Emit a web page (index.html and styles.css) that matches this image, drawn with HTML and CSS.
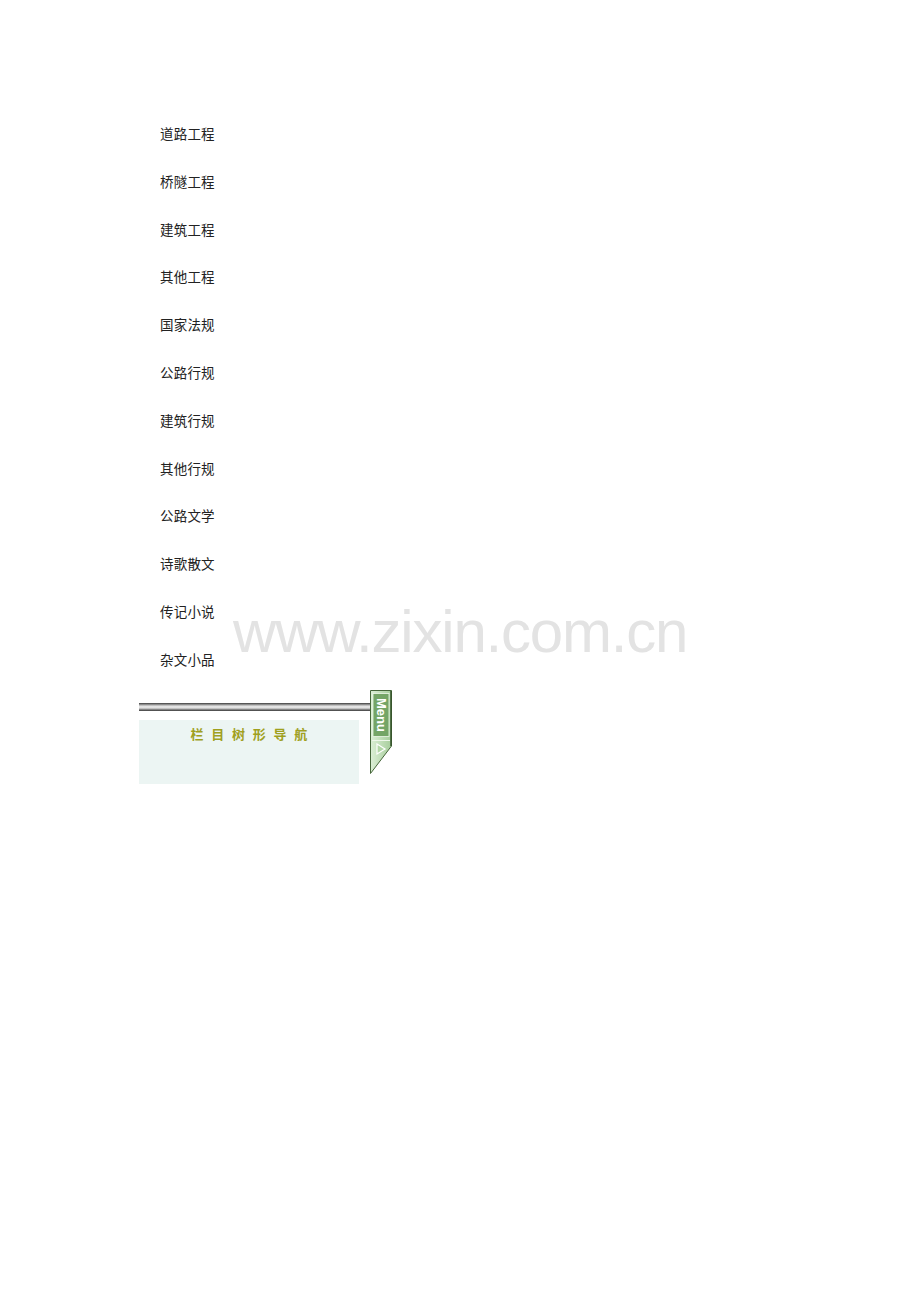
FILE: index.html
```html
<!DOCTYPE html>
<html lang="zh">
<head>
<meta charset="utf-8">
<title>栏目树形导航</title>
<link rel="stylesheet" href="styles.css">
</head>
<body>
<div class="page">
  <ul class="nav-list">
    <li>道路工程</li>
    <li>桥隧工程</li>
    <li>建筑工程</li>
    <li>其他工程</li>
    <li>国家法规</li>
    <li>公路行规</li>
    <li>建筑行规</li>
    <li>其他行规</li>
    <li>公路文学</li>
    <li>诗歌散文</li>
    <li>传记小说</li>
    <li>杂文小品</li>
  </ul>
  <div class="menu-area">
    <div class="menu-left">
      <div class="bar"></div>
      <div class="panel">
        <div class="panel-title">栏 目 树 形 导 航</div>
      </div>
    </div>
    <svg class="menu-tab" width="22" height="84" viewBox="0 0 22 84">
      <defs>
        <linearGradient id="tabg" x1="0" y1="0" x2="1" y2="0">
          <stop offset="0" stop-color="#dcefd6"/>
          <stop offset="1" stop-color="#a6cd9b"/>
        </linearGradient>
      </defs>
      <polygon points="0.5,0.5 21.5,0.5 21.5,56 0.5,83.5" fill="url(#tabg)" stroke="#46663a" stroke-width="1"/>
      <line x1="21" y1="1" x2="21" y2="56" stroke="#34522a" stroke-width="1.5"/>
      <rect x="3" y="3.5" width="16" height="43" fill="#74a566" stroke="#eef7ea" stroke-width="0.8"/>
      <text x="11" y="25" transform="rotate(90 11 25)" text-anchor="middle" dominant-baseline="central" class="tab-text">Menu</text>
      <line x1="2" y1="50.5" x2="20" y2="50.5" stroke="#eef7ea" stroke-width="1"/>
      <polygon points="7,54 15,59 7,64" fill="#b2d6a6" stroke="#ffffff" stroke-width="1.2"/>
    </svg>
  </div>
  <div class="watermark">www.zixin.com.cn</div>
</div>
</body>
</html>
```
FILE: styles.css
```css
html, body {
  margin: 0;
  padding: 0;
  background: #ffffff;
}
.page {
  position: relative;
  width: 920px;
  height: 1302px;
  padding-top: 110px;
  box-sizing: border-box;
}
.nav-list {
  list-style: none;
  margin: 0;
  padding: 0 0 0 160px;
  font-family: "Noto Sans CJK SC", "Liberation Serif", serif;
  font-size: 13.5px;
  line-height: 47.8px;
  color: #222222;
}
.nav-list li {
  height: 47.8px;
  letter-spacing: 0.2px;
}
.menu-area {
  display: flex;
  align-items: flex-start;
  margin-left: 139px;
  margin-top: 6px;
}
.menu-left {
  width: 231px;
  padding-top: 13px;
}
.bar {
  height: 8px;
  background: linear-gradient(to bottom, #3a3a3a 0, #7a7a7a 14%, #cfcfcf 35%, #f2f2f2 50%, #c4c4c4 68%, #6e6e6e 86%, #3a3a3a 100%);
}
.panel {
  margin-top: 9px;
  width: 220px;
  height: 64px;
  background: #ecf5f3;
}
.panel-title {
  padding-top: 6px;
  padding-left: 2px;
  text-align: center;
  font-family: "Noto Sans CJK SC", "Liberation Sans", sans-serif;
  font-size: 13px;
  font-weight: bold;
  line-height: 16px;
  letter-spacing: 2.4px;
  color: #a0a01e;
}
.menu-tab {
  display: block;
  flex: none;
}
.tab-text {
  font-family: "Liberation Sans", Arial, sans-serif;
  font-size: 13px;
  font-weight: bold;
  fill: #ffffff;
}
.watermark {
  position: absolute;
  left: 233px;
  top: 597px;
  font-family: "Liberation Sans", Arial, sans-serif;
  font-size: 60px;
  line-height: 70px;
  letter-spacing: -1.2px;
  color: #e3e3e3;
  white-space: nowrap;
  pointer-events: none;
}
```
